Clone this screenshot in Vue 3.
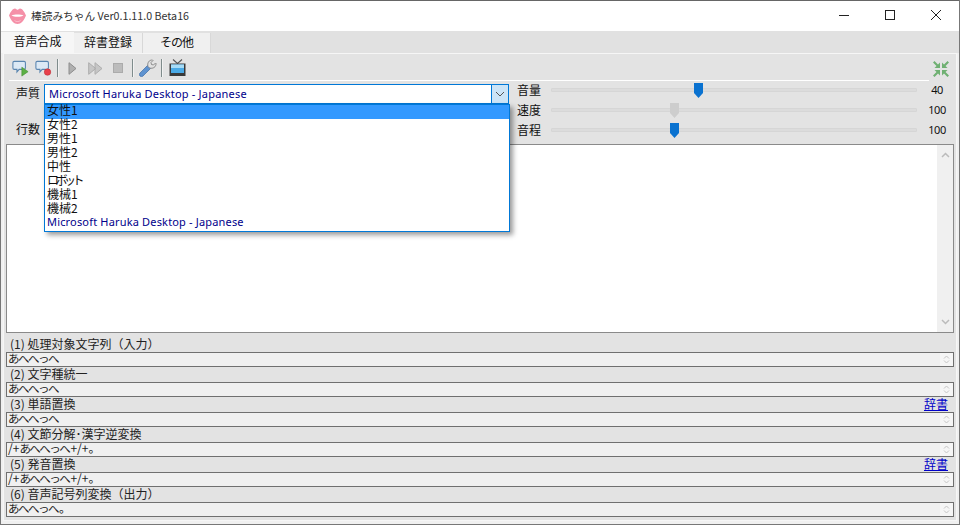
<script setup>
const voices = ['女性1','女性2','男性1','男性2','中性','ロボット','機械1','機械2','Microsoft Haruka Desktop - Japanese']
const sliders = [
  { label: '音量', pos: 142, val: '40', on: true },
  { label: '速度', pos: 118, val: '100', on: false },
  { label: '音程', pos: 118, val: '100', on: true },
]
const sections = [
  { label: '(1) 処理対象文字列（入力）', pre: '', kana: 'あへへっへ', post: '' },
  { label: '(2) 文字種統一', pre: '', kana: 'あへへっへ', post: '' },
  { label: '(3) 単語置換', pre: '', kana: 'あへへっへ', post: '', link: true },
  { label: '(4) 文節分解･漢字逆変換', pre: '/+', kana: 'あへへっへ', post: '+/+。' },
  { label: '(5) 発音置換', pre: '/+', kana: 'あへへっへ', post: '+/+。', link: true },
  { label: '(6) 音声記号列変換（出力）', pre: '', kana: 'あへへっへ', post: '。' },
]
</script>

<template>
  <div class="win">
    <header class="title">
      <svg class="logo" width="17" height="16" viewBox="0 0 17 16">
        <path d="M0 7.500C2 3 4.500 0 6.500 .7 7.500 1 8 1.800 8.500 1.800S9.500 1 10.500 .7C12.500 0 15 3 17 7.500 15 12.500 12 16 8.500 16S2 12.500 0 7.500z" fill="#f590a8"/>
        <path d="M2.500 7.200c3-1 9-1 12 0-2.500 2.200-9.500 2.200-12 0z" fill="#fff"/>
        <path d="M5 12c2 1.500 5 1.500 7 0-1 2.500-6 2.500-7 0z" fill="#fbc6d2"/>
      </svg>
      <span class="title-text">棒読みちゃん Ver0.1.11.0 Beta16</span>
      <div class="caption">
        <svg width="46" height="31" viewBox="0 0 46 31"><path d="M18 15.500h10" stroke="#222"/></svg>
        <svg width="46" height="31" viewBox="0 0 46 31"><rect x="18.500" y="10.500" width="9" height="9" fill="none" stroke="#222"/></svg>
        <svg width="46" height="31" viewBox="0 0 46 31"><path d="M18 10l10 10M28 10L18 20" stroke="#222"/></svg>
      </div>
    </header>

    <nav class="tabs">
      <div class="tab active">音声合成</div>
      <div class="tab t2">辞書登録</div>
      <div class="tab t3">その他</div>
    </nav>

    <main class="page">
      <div class="toolbar">
        <svg width="17" height="17" viewBox="0 0 19 19" class="ic i1">
          <path d="M2.500 1.500h11a1.500 1.500 0 0 1 1.500 1.500v6a1.500 1.500 0 0 1-1.500 1.500H8l-2.500 3v-3h-3A1.500 1.500 0 0 1 1 9V3a1.500 1.500 0 0 1 1.500-1.500z" fill="#dce9f5" stroke="#5b86b0" stroke-width="1.200"/>
          <path d="M11 8l7 5-7 5z" fill="#5cb044" stroke="#3c8a2c" stroke-width=".6"/>
        </svg>
        <svg width="17" height="17" viewBox="0 0 19 19" class="ic i2">
          <path d="M2.500 1.500h11a1.500 1.500 0 0 1 1.500 1.500v6a1.500 1.500 0 0 1-1.500 1.500H8l-2.500 3v-3h-3A1.500 1.500 0 0 1 1 9V3a1.500 1.500 0 0 1 1.500-1.500z" fill="#dce9f5" stroke="#5b86b0" stroke-width="1.200"/>
          <circle cx="14" cy="13.500" r="3.600" fill="#e8404a" stroke="#b82a30" stroke-width=".6"/>
        </svg>
        <i class="sep s1"></i>
        <svg width="9" height="13" viewBox="0 0 9 13" class="ic p1"><path d="M1 .700l7 5.800-7 5.800z" fill="#b0b0b0" stroke="#8c8c8c"/></svg>
        <svg width="15" height="13" viewBox="0 0 15 13" class="ic p2"><path d="M.700 .700l7 5.800-7 5.800zM7 .700l7 5.800-7 5.800z" fill="#c6c6c6" stroke="#adadad"/></svg>
        <svg width="10" height="10" viewBox="0 0 10 10" class="ic p3"><rect x=".5" y=".5" width="9" height="9" fill="#bcbcbc" stroke="#ababab"/></svg>
        <i class="sep s2"></i>
        <svg width="18" height="18" viewBox="0 0 18 18" class="ic w">
          <path d="M1 14L8.500 6.500 11.500 9.500 4 17a2.100 2.100 0 0 1-3-3z" fill="#5f93d0" stroke="#3d6da6" stroke-width=".7"/>
          <path d="M9 7.500C8 4 10 .8 13.500 1l.5.500-2 2 .5 2 2 .5 2-2 .5.500c.2 3.500-3 5.500-6.500 4.500z" fill="#e2e2e2" stroke="#777" stroke-width=".8"/>
        </svg>
        <i class="sep s3"></i>
        <svg width="17" height="17" viewBox="0 0 17 17" class="ic tv">
          <path d="M4 .500l4.500 4L13 .500" fill="none" stroke="#555" stroke-width="1.100"/>
          <rect x=".5" y="4.500" width="16" height="12.500" fill="#3a3a3a"/>
          <rect x="2" y="5.500" width="13" height="8.500" fill="#4aaae6"/>
          <rect x="2" y="5.500" width="13" height="3.500" fill="#a7dcf7"/>
        </svg>
        <svg width="18" height="18" viewBox="0 0 18 18" class="ic shrink">
          <g fill="#6fb072">
            <path d="M1 2.500L2.500 1l3.500 3.500L8 2.500V8H2.500l2-2z"/>
            <path d="M17 2.500L15.500 1 12 4.500 10 2.500V8h5.500l-2-2z"/>
            <path d="M1 15.500L2.500 17 6 13.500 8 15.500V10H2.500l2 2z"/>
            <path d="M17 15.500L15.500 17 12 13.500 10 15.500V10h5.500l-2 2z"/>
          </g>
        </svg>
      </div>
      <div class="rule"></div>

      <div class="settings">
        <div class="left">
          <div class="lbl l1">声質</div>
          <div class="combo">
            <span class="combo-val">Microsoft Haruka Desktop - Japanese</span>
            <span class="combo-btn">
              <svg width="10" height="6" viewBox="0 0 10 6"><path d="M1 1l4 4 4-4" fill="none" stroke="#555"/></svg>
            </span>
          </div>
          <div class="lbl l2">行数</div>
        </div>
        <div class="right">
          <div v-for="s in sliders" :key="s.label" class="srow">
            <span class="slbl">{{ s.label }}</span>
            <div class="track">
              <svg class="thumb" :style="{ left: s.pos + 'px' }" width="9" height="15" viewBox="0 0 9 15">
                <path d="M0 0h9v10l-4.500 5L0 10z" :fill="s.on ? '#0a72d0' : '#cdcdcd'"/>
              </svg>
            </div>
            <span class="sval">{{ s.val }}</span>
          </div>
        </div>
      </div>

      <div class="memo">
        <div class="vscroll">
          <svg width="9" height="6" viewBox="0 0 9 6"><path d="M1 5l3.500-3.500L8 5" fill="none" stroke="#bbb" stroke-width="1.500"/></svg>
          <svg width="9" height="6" viewBox="0 0 9 6"><path d="M1 1l3.500 3.500L8 1" fill="none" stroke="#bbb" stroke-width="1.500"/></svg>
        </div>
      </div>

      <section v-for="(s, i) in sections" :key="s.label" class="sec" :class="{ first: i === 0 }">
        <div class="sec-head">
          <span>{{ s.label }}</span>
          <a v-if="s.link" class="link">辞書</a>
        </div>
        <div class="field">
          <span class="ftext">{{ s.pre }}<span class="kana">{{ s.kana }}</span>{{ s.post }}</span>
          <span class="spin">
            <svg width="7" height="4" viewBox="0 0 7 4"><path d="M1 3.500l2.500-2.500 2.500 2.500" fill="none" stroke="#c4c4c4"/></svg>
            <svg width="7" height="4" viewBox="0 0 7 4"><path d="M1 .500l2.500 2.500 2.500-2.500" fill="none" stroke="#c4c4c4"/></svg>
          </span>
        </div>
      </section>
    </main>

    <div class="drop">
      <div v-for="(v, i) in voices" :key="v" class="opt" :class="{ sel: i === 0, kana5: i === 5, ms: i === 8 }">{{ v }}</div>
    </div>
  </div>
</template>

<style>
html, body { margin: 0; background: #f0f0f0; overflow: hidden; }
</style>

<style scoped>
.win {
  position: relative; width: 960px; height: 525px; overflow: hidden;
  display: flex; flex-direction: column; background: #f0f0f0;
  box-sizing: border-box; border: 1px solid #777; border-top: none;
  font: 12px/14px "Noto Sans CJK JP", "Noto Sans", sans-serif; color: #111;
}
.title { height: 31px; flex: none; background: #fff; display: flex; align-items: center; box-shadow: inset 0 1px #666; }
.logo { margin-left: 8px; }
.title-text { margin-left: 5px; font-size: 10.700px; color: #333; }
.caption { margin-left: auto; display: flex; }
.tabs { height: 22px; flex: none; display: flex; align-items: flex-end; background: #e1e1e1; }
.tab { height: 20px; background: #f0f0f0; border-right: 1px solid #d8d8d8; box-sizing: border-box; text-align: center; line-height: 18px; }
.tab.active { width: 73px; height: 21px; background: #f6f6f6; border: none; }
.t2 { width: 69px; }
.t3 { width: 68px; letter-spacing: -1px; }
.page { flex: 1; background: #e3e3e3; border: 1px solid #f6f6f6; padding: 0 2px; margin: 0 2px 3px; display: flex; flex-direction: column; min-height: 0; }
.toolbar { position: relative; height: 26px; flex: none; margin: 0 -2px; }
.rule { height: 1px; flex: none; background: #fff; margin: 0 25px 0 3px; }
.ic { position: absolute; }
.i1 { left: 8px; top: 6px; }
.i2 { left: 31px; top: 6px; }
.p1 { left: 64px; top: 8px; }
.p2 { left: 84px; top: 8px; }
.p3 { left: 109px; top: 9px; }
.w { left: 135px; top: 5px; }
.tv { left: 165px; top: 5px; }
.shrink { left: 928px; top: 6px; }
.sep { position: absolute; top: 5px; height: 18px; width: 1px; background: #7f8c8c; box-shadow: 1px 0 #f2f2f2; }
.s1 { left: 53px; } .s2 { left: 128px; } .s3 { left: 157px; }
.settings { height: 63px; flex: none; display: flex; }
.left { position: relative; width: 505px; flex: none; }
.lbl { position: absolute; left: 10px; }
.l1 { top: 5px; } .l2 { top: 41px; }
.combo { position: absolute; left: 38px; top: 3px; width: 465px; height: 20px; background: #fff; border: 1px solid #0078d7; box-sizing: border-box; display: flex; align-items: center; justify-content: space-between; }
.combo-val { color: #00008b; padding-left: 4px; font-family: "Noto Sans", sans-serif; font-size: 11px; letter-spacing: .2px; }
.combo-btn { width: 16px; height: 18px; background: #cce4f7; border-left: 1px solid #0078d7; display: flex; align-items: center; justify-content: center; }
.right { flex: 1; display: flex; flex-direction: column; margin-top: -1px; }
.srow { display: flex; align-items: center; height: 20px; }
.slbl { width: 34px; margin-left: 6px; }
.track { position: relative; width: 366px; height: 4px; background: #dcdcdc; border: 1px solid #d6d6d6; box-sizing: border-box; border-radius: 1px; }
.thumb { position: absolute; top: -6px; }
.sval { width: 24px; margin-left: 8px; text-align: center; font-size: 11px; letter-spacing: -.5px; font-family: "Noto Sans", sans-serif; }
.memo { position: relative; height: 189px; flex: none; background: #fff; border: 1px solid #8a8a8a; box-sizing: border-box; }
.vscroll { position: absolute; right: 0; top: 0; bottom: 0; width: 16px; background: #f0f0f0; display: flex; flex-direction: column; justify-content: space-between; align-items: center; padding: 7px 0; box-sizing: border-box; }
.sec { height: 30px; flex: none; display: flex; flex-direction: column; }
.sec.first { height: 34px; }
.sec-head { height: 15px; flex: none; display: flex; justify-content: space-between; padding: 0 0 2px 4px; align-items: center; color: #222; box-sizing: border-box; }
.first .sec-head { height: 19px; padding-top: 4px; }
.link { color: #0000c8; text-decoration: underline; margin-right: 6px; }
.field { height: 15px; flex: none; background: #f0f0f0; border: 1px solid #707070; box-sizing: border-box; display: flex; align-items: center; position: relative; }
.ftext { padding-left: 1px; margin-top: -3px; color: #222; font-size: 12px; line-height: 11px; }
.kana { font-size: 11.500px; letter-spacing: -1.500px; margin-right: 1px; }
.spin { position: absolute; right: 0; top: 0; bottom: 0; width: 13px; display: flex; flex-direction: column; align-items: center; justify-content: center; gap: 1px; background: #f6f6f6; }
.drop { position: absolute; left: 43px; top: 104px; width: 466px; height: 128px; background: #fff; border: 1px solid #0078d7; box-sizing: border-box; box-shadow: 3px 3px 5px rgba(0,0,0,.4); }
.opt { height: 14px; line-height: 10px; padding-left: 2px; color: #111; }
.opt.sel { background: #3399ff; }
.opt.kana5 { letter-spacing: -3.500px; }
.opt.ms { color: #00008b; font-family: "Noto Sans", sans-serif; font-size: 11px; letter-spacing: .17px; }
</style>
